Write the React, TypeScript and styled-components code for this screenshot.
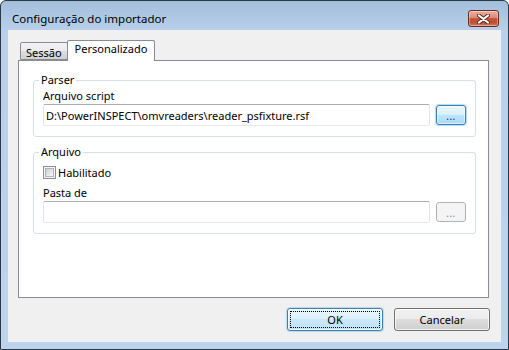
import React from 'react';
import styled, { createGlobalStyle } from 'styled-components';

const GlobalStyle = createGlobalStyle`
  html, body {
    margin: 0;
    padding: 0;
    background: #ffffff;
  }
  body {
    font-family: 'Noto Sans', 'DejaVu Sans', sans-serif;
    font-size: 11px;
    color: #000;
  }
  * {
    box-sizing: border-box;
  }
`;

const CloseIcon = () => (
  <svg width="13" height="10" viewBox="0 0 13 10">
    <path d="M2 1.5 L11 8.5 M11 1.5 L2 8.5" stroke="#5b2a22" strokeWidth="4" strokeLinecap="round" />
    <path d="M2 1.5 L11 8.5 M11 1.5 L2 8.5" stroke="#ffffff" strokeWidth="2.2" strokeLinecap="round" />
  </svg>
);

const App = () => {
  return (
    <>
      <GlobalStyle />
      <Window>
        <TitleBar>
          <Title>Configuração do importador</Title>
          <CloseButton>
            <CloseIcon />
          </CloseButton>
        </TitleBar>

        <Client>
          <TabStrip>
            <Tab>Sessão</Tab>
            <Tab selected>Personalizado</Tab>
          </TabStrip>

          <Panel>
            <Group>
              <Legend>Parser</Legend>
              <Label>Arquivo script</Label>
              <Row>
                <TextBox defaultValue="D:\PowerINSPECT\omvreaders\reader_psfixture.rsf" />
                <BrowseButton hot>...</BrowseButton>
              </Row>
            </Group>

            <Group spaced>
              <Legend>Arquivo</Legend>
              <CheckRow>
                <CheckBox>
                  <CheckInner />
                </CheckBox>
                <span>Habilitado</span>
              </CheckRow>
              <Label gap={5}>Pasta de</Label>
              <Row>
                <TextBox defaultValue="" />
                <BrowseButton disabled>...</BrowseButton>
              </Row>
            </Group>
          </Panel>

          <Footer>
            <DialogButton primary>OK</DialogButton>
            <DialogButton>Cancelar</DialogButton>
          </Footer>
        </Client>
      </Window>
    </>
  );
};

export default App;

// ====================== window frame ======================
const Window = styled.div`
  width: 509px;
  height: 350px;
  border: 1px solid #2c3845;
  border-radius: 6px 6px 0 0;
  background: linear-gradient(to bottom, #a3bedc 0px, #b8d0ea 30px, #bcd4ec 100%);
  display: flex;
  flex-direction: column;
  overflow: hidden;
`;

const TitleBar = styled.div`
  height: 29px;
  display: flex;
  align-items: flex-start;
  padding: 0 9px 0 11px;
`;

const Title = styled.div`
  flex: 1;
  font-size: 11.5px;
  line-height: 16px;
  margin-top: 10px;
  color: #000;
`;

const CloseButton = styled.div`
  width: 31px;
  height: 17px;
  margin-top: 9px;
  border: 1px solid #6a2c22;
  border-radius: 3px;
  background: linear-gradient(
    to bottom,
    #eab0a2 0%,
    #d98a79 45%,
    #c45840 50%,
    #c04a31 75%,
    #d67b5f 100%
  );
  box-shadow: inset 0 0 0 1px rgba(255, 255, 255, 0.35);
  display: flex;
  align-items: center;
  justify-content: center;
`;

const Client = styled.div`
  flex: 1;
  margin: 0 7px 7px;
  background: #f0f0f0;
  padding: 10px 12px 11px 10px;
  display: flex;
  flex-direction: column;
`;

// ====================== tabs ======================
const TabStrip = styled.div`
  height: 21px;
  display: flex;
  align-items: flex-end;
  padding-left: 2px;
  margin-bottom: -1px;
  position: relative;
  z-index: 1;
`;

const Tab = styled.div<{ selected?: boolean }>`
  height: ${(p) => (p.selected ? '21px' : '18px')};
  margin-bottom: ${(p) => (p.selected ? '0' : '1px')};
  margin-right: -1px;
  padding: ${(p) => (p.selected ? '1px 7px 0 7px' : '3px 5px 0 5px')};
  border: 1px solid #898c95;
  border-bottom: ${(p) => (p.selected ? 'none' : '1px solid #898c95')};
  border-radius: 2px 2px 0 0;
  background: ${(p) =>
    p.selected
      ? '#ffffff'
      : 'linear-gradient(to bottom, #f3f3f3 0%, #ebebeb 50%, #dedede 50%, #d0d0d0 100%)'};
  line-height: 14px;
  white-space: nowrap;
`;

const Panel = styled.div`
  flex: 1;
  background: #ffffff;
  border: 1px solid #898c95;
  padding: 11px 12px 0 14px;
`;

// ====================== group boxes ======================
const Group = styled.fieldset<{ spaced?: boolean }>`
  margin: ${(p) => (p.spaced ? '7px 0 0' : '0')};
  border: 1px solid #d5dfe5;
  border-radius: 3px;
  padding: 0 9px 10px;
  min-width: 0;
`;

const Legend = styled.legend`
  padding: 0 2px;
  margin-left: -4px;
  line-height: 16px;
`;

const Label = styled.div<{ gap?: number }>`
  line-height: 16px;
  margin-top: ${(p) => p.gap || 0}px;
`;

const Row = styled.div`
  display: flex;
  align-items: center;
  gap: 6px;
`;

const TextBox = styled.input`
  flex: 1;
  min-width: 0;
  height: 22px;
  border: 1px solid;
  border-color: #abadb3 #e2e3ea #e3e9ef #e2e3ea;
  border-radius: 2px;
  padding: 0 2px;
  font-family: inherit;
  font-size: 11px;
  color: #000;
  background: #fff;
  outline: none;
`;

const BrowseButton = styled.div<{ hot?: boolean; disabled?: boolean }>`
  width: 30px;
  height: 20px;
  border-radius: 3px;
  display: flex;
  align-items: flex-end;
  justify-content: center;
  padding-bottom: 3px;
  font-size: 10px;
  line-height: 10px;
  letter-spacing: 0.5px;
  border: 1px solid ${(p) => (p.hot ? '#3c7fb1' : p.disabled ? '#adb2b5' : '#707070')};
  color: ${(p) => (p.disabled ? '#838383' : '#1c1c3c')};
  background: ${(p) =>
    p.hot
      ? 'linear-gradient(to bottom, #eaf6fd 0%, #d9f0fc 50%, #bee6fd 50%, #a7d9f5 100%)'
      : p.disabled
      ? '#f4f4f4'
      : 'linear-gradient(to bottom, #f2f2f2 0%, #ebebeb 50%, #dddddd 50%, #cfcfcf 100%)'};
  box-shadow: ${(p) =>
    p.hot ? 'inset 0 0 0 1px rgba(255,255,255,0.55), 0 0 1px 1px rgba(80,170,230,0.45)' : 'none'};
`;

const CheckRow = styled.div`
  display: flex;
  align-items: center;
  gap: 2px;
  height: 16px;
  margin-top: 4px;
`;

const CheckBox = styled.div`
  width: 13px;
  height: 13px;
  border: 1px solid #8e8f8f;
  background: #f4f4f4;
  padding: 1px;
`;

const CheckInner = styled.div`
  width: 100%;
  height: 100%;
  border: 1px solid #aeb3b9;
  background: linear-gradient(135deg, #c9cdd2 0%, #e6e7e9 60%, #f7f7f7 100%);
`;

// ====================== footer ======================
const Footer = styled.div`
  display: flex;
  justify-content: flex-end;
  gap: 11px;
  margin-top: 10px;
  margin-right: -1px;
`;

const DialogButton = styled.div<{ primary?: boolean }>`
  width: 96px;
  height: 23px;
  border-radius: 3px;
  display: flex;
  align-items: center;
  justify-content: center;
  font-size: 11px;
  border: 1px solid ${(p) => (p.primary ? '#3c7fb1' : '#707070')};
  background: ${(p) =>
    p.primary
      ? 'linear-gradient(to bottom, #eaf6fd 0%, #dbf0fc 50%, #c9e8f9 50%, #bfe3f7 100%)'
      : 'linear-gradient(to bottom, #f2f2f2 0%, #ebebeb 50%, #dddddd 50%, #cfcfcf 100%)'};
  box-shadow: inset 0 0 0 1px rgba(255, 255, 255, 0.7)
    ${(p) => (p.primary ? ', 0 0 1px 1px rgba(90, 180, 230, 0.35)' : '')};
  outline: ${(p) => (p.primary ? '1px dotted #000' : 'none')};
  outline-offset: -4px;
`;
